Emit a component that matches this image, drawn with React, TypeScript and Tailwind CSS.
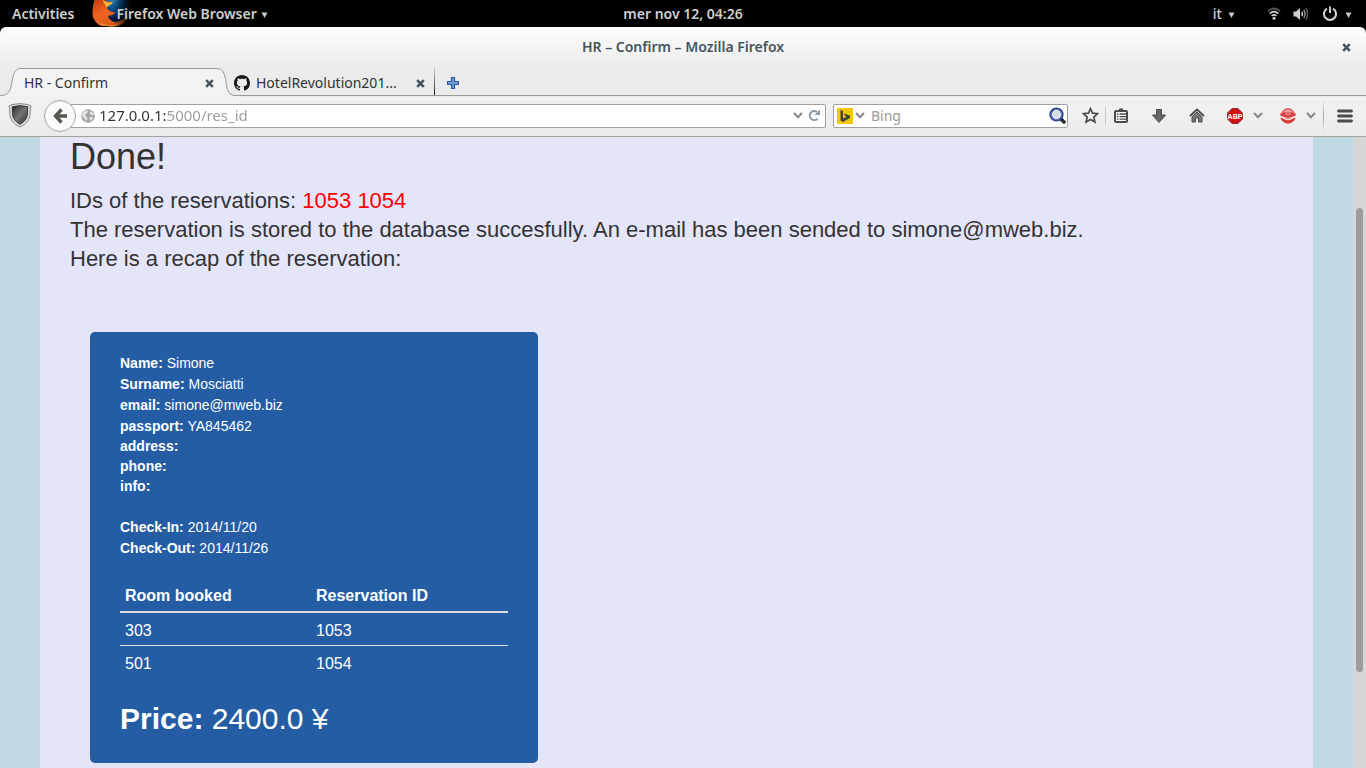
import type { ReactNode } from "react";

const ui = "font-['Noto_Sans','Open_Sans',sans-serif]";

function FirefoxLogo() {
  return (
    <svg width="40" height="27" viewBox="0 0 40 27" aria-hidden="true">
      <defs>
        <radialGradient id="globe" cx="0.5" cy="0.25" r="0.7">
          <stop offset="0" stopColor="#2c8cc4" />
          <stop offset="0.5" stopColor="#0d4f8f" />
          <stop offset="1" stopColor="#04183c" />
        </radialGradient>
        <linearGradient id="fox" x1="0" y1="0" x2="0.7" y2="1">
          <stop offset="0" stopColor="#c93a12" />
          <stop offset="0.45" stopColor="#ee6420" />
          <stop offset="1" stopColor="#d9591a" />
        </linearGradient>
        <linearGradient id="fade" x1="0" y1="0" x2="1" y2="0">
          <stop offset="0.5" stopColor="#000" stopOpacity="0" />
          <stop offset="1" stopColor="#000" stopOpacity="1" />
        </linearGradient>
      </defs>
      <circle cx="20" cy="8" r="19" fill="#a8641c" />
      <circle cx="22" cy="6" r="16" fill="url(#globe)" />
      <path
        d="M4 0 C0 7 -1 16 3 21 C5 24 8 26 11 26 L25 26 C30 24 34 21 36 17 C31 22 26 24 20 21 C17 19 15 17 17 15.500 C20 16 22 14 24 12 C20 13 15 10 15 7 C16 4 19 5 21 2 C18 2 14 1 12 0 Z"
        fill="url(#fox)"
      />
      <path d="M11 0 C13 2 17 3 21 2 C19 6 16 5 15 8 C14 5 11 3 11 0 Z" fill="#f6b53a" />
      <path d="M5 21 C12 26 22 27 30 21 C27 25 24 26 21 26 L12 26 C9 26 7 24 5 21 Z" fill="#f4a03a" opacity="0.6" />
      <rect width="40" height="27" fill="url(#fade)" />
    </svg>
  );
}

function Caret() {
  return (
    <svg width="7" height="8" viewBox="0 0 7 8" aria-hidden="true">
      <path d="M0.500 2.500H6.500L3.500 8Z" fill="#c9cac6" />
    </svg>
  );
}

function CloseMark() {
  return (
    <svg width="9" height="9" viewBox="0 0 9 9" aria-hidden="true">
      <path d="M1.2 1.2L7.8 7.8M7.8 1.2L1.2 7.8" stroke="#46555c" strokeWidth="2.6" />
    </svg>
  );
}

function Chevron() {
  return (
    <svg width="10" height="7" viewBox="0 0 10 7" aria-hidden="true">
      <path d="M1 1L5 5.3L9 1" fill="none" stroke="#888a85" strokeWidth="2" />
    </svg>
  );
}

function IconButton({ label, className, children }: { label: string; className?: string; children: ReactNode }) {
  return (
    <button aria-label={label} className={`flex shrink-0 items-center justify-center ${className ?? ""}`}>
      {children}
    </button>
  );
}

function TopBar() {
  return (
    <header className="grid h-[27px] shrink-0 grid-cols-[1fr_auto_1fr] items-center bg-black text-sm font-semibold text-[#d0d0cc]">
      <div className="flex h-[27px] items-center pl-3">
        <button>Activities</button>
        <button className="ml-[18px] flex h-full items-center">
          <FirefoxLogo />
          <span className="-ml-4 pr-1">Firefox Web Browser</span>
          <Caret />
        </button>
      </div>
      <time>mer nov 12, 04:26</time>
      <div className="flex items-center justify-end pr-[14px]">
        <button className="mr-8 flex items-center gap-1.5 font-medium">
          it <Caret />
        </button>
        <svg width="14" height="13" viewBox="0 0 14 13" fill="none" aria-label="Wireless" className="mr-3">
          <path d="M0.8 4.3Q7 -1.3 13.2 4.3" stroke="#555" strokeWidth="1.7" />
          <path d="M2.7 6.6Q7 2.8 11.3 6.6" stroke="#d0d0cc" strokeWidth="1.7" />
          <path d="M4.6 8.8Q7 6.8 9.4 8.8" stroke="#d0d0cc" strokeWidth="1.6" />
          <circle cx="7" cy="11.2" r="1.5" fill="#d0d0cc" />
        </svg>
        <svg width="16" height="14" viewBox="0 0 16 14" fill="none" aria-label="Volume" className="mr-3.5">
          <path d="M0.5 4.5H3L7 1V13L3 9.5H0.5Z" fill="#d0d0cc" />
          <path d="M8.8 4.8Q10.2 7 8.8 9.2" stroke="#d0d0cc" strokeWidth="1.5" />
          <path d="M10.8 3Q13.2 7 10.8 11" stroke="#8a8a88" strokeWidth="1.5" />
          <path d="M12.8 1.2Q16.4 7 12.8 12.8" stroke="#555" strokeWidth="1.5" />
        </svg>
        <button aria-label="Power" className="flex items-center gap-2">
          <svg width="14" height="15" viewBox="0 0 14 15" fill="none" aria-hidden="true">
            <path d="M4 2.7A6 6 0 1 0 10 2.7" stroke="#d0d0cc" strokeWidth="2" />
            <path d="M7 0.5V7" stroke="#d0d0cc" strokeWidth="2" />
          </svg>
          <Caret />
        </button>
      </div>
    </header>
  );
}

function TabStrip() {
  return (
    <div role="tablist" className="flex h-[30px] items-stretch text-sm text-[#2e3436]">
      <svg width="20" height="30" viewBox="0 0 20 30" aria-hidden="true" className="shrink-0">
        <path d="M0 28.5C16 28.5 11 12 15 5Q17 1.5 20 1.5V30H0Z" fill="#f3f3f3" />
        <path d="M0 28.5H2C14 28 10 12 15 4.5Q17 1.5 20 1.5" fill="none" stroke="#9a9a98" />
      </svg>
      <div className="mt-px flex w-[197px] items-center border-t border-[#9a9a98] bg-[#f3f3f3] pl-1">
        <button role="tab" aria-selected="true" className="grow text-left">
          HR - Confirm
        </button>
        <IconButton label="Close tab" className="size-4">
          <CloseMark />
        </IconButton>
      </div>
      <svg width="17" height="30" viewBox="0 0 17 30" aria-hidden="true" className="shrink-0">
        <path d="M0 1.5Q4 1.5 6 5C10 13 7 28.5 17 28.5V30H0Z" fill="#f3f3f3" />
        <path d="M0 1.5Q4 1.5 6 4.5C11 13 7 27 17 28.5" fill="none" stroke="#9a9a98" />
      </svg>
      <div className="mb-px flex grow items-stretch border-b border-[#9a9a98]">
        <button role="tab" aria-selected="false" className="flex w-[176px] items-center gap-1.5 pt-1">
          <svg width="16" height="16" viewBox="0 0 16 16" fill="#191717" aria-hidden="true" className="shrink-0">
            <path d="M8 0C3.58 0 0 3.58 0 8c0 3.54 2.29 6.53 5.47 7.59.4.07.55-.17.55-.38 0-.19-.01-.82-.01-1.49-2.01.37-2.53-.49-2.69-.94-.09-.23-.48-.94-.82-1.13-.28-.15-.68-.52-.01-.53.63-.01 1.08.58 1.23.82.72 1.21 1.87.87 2.33.66.07-.52.28-.87.51-1.07-1.78-.2-3.64-.89-3.64-3.95 0-.87.31-1.59.82-2.15-.08-.2-.36-1.02.08-2.12 0 0 .67-.21 2.2.82.64-.18 1.32-.27 2-.27s1.36.09 2 .27c1.53-1.04 2.2-.82 2.2-.82.44 1.1.16 1.92.08 2.12.51.56.82 1.27.82 2.15 0 3.07-1.87 3.75-3.65 3.95.29.25.54.73.54 1.48 0 1.07-.01 1.93-.01 2.2 0 .21.15.46.55.38A8.01 8.01 0 0 0 16 8c0-4.42-3.58-8-8-8z" />
          </svg>
          <span className="whitespace-nowrap">HotelRevolution201...</span>
        </button>
        <IconButton label="Close tab" className="w-5 pt-1">
          <CloseMark />
        </IconButton>
        <span className="ml-1 w-px bg-linear-to-b from-[#d8d8d8] to-[#222]" />
        <IconButton label="New tab" className="ml-2.5 w-4 pt-1">
          <svg width="12" height="12" viewBox="0 0 12 12" aria-hidden="true">
            <path d="M4.5 0.5H7.5V4.5H11.5V7.5H7.5V11.5H4.5V7.5H0.5V4.5H4.5Z" fill="#6f9fd6" stroke="#2a5b9e" strokeWidth="1.2" />
          </svg>
        </IconButton>
      </div>
    </div>
  );
}

function NavBar() {
  return (
    <div className="flex h-10 items-center border-b border-[#a2a29f] bg-linear-to-b from-[#f2f2f2] to-[#ebebeb] pb-0.5 pl-2">
      <IconButton label="Site protection" className="w-6">
        <svg width="24" height="25" viewBox="0 0 24 25" aria-hidden="true">
          <defs>
            <linearGradient id="shield" x1="0" y1="0" x2="1" y2="1">
              <stop offset="0" stopColor="#2b2b2b" />
              <stop offset="0.5" stopColor="#747474" />
              <stop offset="1" stopColor="#2b2b2b" />
            </linearGradient>
          </defs>
          <path d="M1 3L4 1.5Q12 -0.2 20 1.5L23 3Q21.8 5 22.3 9Q22.5 19.5 12 24Q1.500 19.5 1.700 9Q2.200 5 1 3Z" fill="#dedede" stroke="#858585" />
          <path d="M4.200 3.800Q12 1.500 19.800 3.800Q19.400 6 19.600 9.500Q19.400 17.500 12 21.300Q4.600 17.500 4.400 9.500Q4.600 6 4.200 3.800Z" fill="url(#shield)" stroke="#333" />
        </svg>
      </IconButton>
      <IconButton label="Back" className="relative ml-3 size-8 rounded-full border border-[#9aa5b0] bg-[#fafafa]">
        <svg width="15" height="16" viewBox="0 0 15 16" fill="none" aria-hidden="true">
          <path d="M8.500 1.500L2.500 8L8.500 14.500M2.500 8H14" stroke="#555753" strokeWidth="3.400" />
        </svg>
      </IconButton>
      <div className="-ml-4 flex h-6 grow items-center rounded-r-xs border border-[#a0a09e] bg-white pr-[3px] pl-5">
        <svg width="14" height="14" viewBox="0 0 14 14" aria-hidden="true" className="shrink-0">
          <circle cx="7" cy="7" r="6.800" fill="#a3a3a3" />
          <path d="M3 2L6 1.200L7 3L5 5L4 7L6 8L6.500 10L5 12.500L4 10L1.500 8L1 5ZM9 2L12 4L13 6L10.500 6L8.500 4.500ZM9 8L12 8L11 11L9 12L8.500 10Z" fill="#e4e4e4" />
        </svg>
        <input
          aria-label="Address"
          defaultValue="127.0.0.1:5000/res_id"
          className="ml-1 min-w-0 grow bg-linear-to-r from-[#2e3436] from-[67px] to-[#999b98] to-[67px] bg-clip-text text-[15px] text-transparent outline-none"
        />
        <IconButton label="History" className="w-4">
          <Chevron />
        </IconButton>
        <IconButton label="Reload" className="w-4">
          <svg width="13" height="13" viewBox="0 0 13 13" fill="none" aria-hidden="true">
            <path d="M9.500 9.700A4.500 4.500 0 1 1 9 3" stroke="#8d9aa8" strokeWidth="2" />
            <path d="M12 0.500V6H6.500Z" fill="#8d9aa8" />
          </svg>
        </IconButton>
      </div>
      <div className="ml-[7px] flex h-6 w-[235px] shrink-0 items-center rounded-xs border border-[#a0a09e] bg-white pr-px pl-[3px]">
        <button aria-label="Search engine" className="flex items-center gap-0.5">
          <svg width="16" height="16" viewBox="0 0 16 16" aria-hidden="true">
            <rect width="16" height="16" fill="#f5c70c" />
            <path d="M3.500 2L6 3V10.500L9.500 8.700L8 8L7 5.500L13 7.500V10L6 14L3.500 12.500Z" fill="#444" />
          </svg>
          <Chevron />
        </button>
        <input
          aria-label="Search"
          placeholder="Bing"
          className="ml-1.5 min-w-0 grow bg-transparent text-sm text-[#333] outline-none placeholder:text-[#999b98]"
        />
        <IconButton label="Search">
          <svg width="17" height="17" viewBox="0 0 17 17" fill="none" aria-hidden="true">
            <path d="M11 11L15 15" stroke="#2b2b2b" strokeWidth="3.600" strokeLinecap="round" />
            <circle cx="7.500" cy="7.500" r="5.800" fill="#fff" stroke="#1f3477" strokeWidth="2.600" />
            <circle cx="7.500" cy="7.500" r="5.400" stroke="#7895df" strokeWidth="1" />
            <circle cx="7.500" cy="7.500" r="3.400" fill="#d6d9e6" />
          </svg>
        </IconButton>
      </div>
      <IconButton label="Bookmark" className="ml-3 w-5">
        <svg width="17" height="17" viewBox="0 0 17 17" aria-hidden="true">
          <path d="M8.500 1.700L10.500 6.200L15.500 6.700L11.800 10L12.900 15L8.500 12.400L4.100 15L5.200 10L1.500 6.700L6.500 6.200Z" fill="#f4f4f4" stroke="#4b4b4b" strokeWidth="1.700" />
        </svg>
      </IconButton>
      <span className="mx-[5px] h-[18px] w-px shrink-0 bg-[#c8c8c8]" />
      <IconButton label="Bookmarks list" className="w-5">
        <svg width="14" height="15" viewBox="0 0 14 15" fill="none" aria-hidden="true">
          <path d="M5 0.500H9V3H5Z" fill="#4b4b4b" />
          <rect x="1" y="3" width="12" height="11" rx="1" fill="#fff" stroke="#4b4b4b" strokeWidth="2" />
          <path d="M3 6H4.500M3 8.600H4.500M3 11.200H4.500M5.500 6H12M5.500 8.600H12M5.500 11.200H12" stroke="#4b4b4b" strokeWidth="1.300" />
        </svg>
      </IconButton>
      <IconButton label="Downloads" className="ml-[18px] w-5">
        <svg width="14" height="14" viewBox="0 0 14 14" aria-hidden="true">
          <path d="M4.500 0.500H9.500V6H13.500L7 13.500L0.500 6H4.500Z" fill="#666" stroke="#4b4b4b" />
        </svg>
      </IconButton>
      <IconButton label="Home" className="ml-[18px] w-5">
        <svg width="16" height="15" viewBox="0 0 16 15" aria-hidden="true">
          <path d="M8 4L13 8.800V14H9.500V10H6.500V14H3V8.800Z" fill="#777" stroke="#4b4b4b" />
          <path d="M1 8L8 1.500L15 8" fill="none" stroke="#4b4b4b" strokeWidth="1.900" />
        </svg>
      </IconButton>
      <IconButton label="Adblock Plus" className="ml-[18px] w-5">
        <svg width="16" height="16" viewBox="0 0 16 16" aria-hidden="true">
          <path d="M5 0.500H11L15.500 5V11L11 15.500H5L0.500 11V5Z" fill="#cc1410" stroke="#8d3230" />
          <text x="8" y="11" textAnchor="middle" fontSize="7" fontWeight="700" fill="#fff" fontFamily="Liberation Sans Narrow, Liberation Sans, sans-serif">
            ABP
          </text>
        </svg>
      </IconButton>
      <IconButton label="Adblock Plus menu" className="ml-[3px] w-5">
        <Chevron />
      </IconButton>
      <IconButton label="Add-on" className="ml-2.5 w-5">
        <svg width="16" height="16" viewBox="0 0 16 16" aria-hidden="true">
          <path d="M1.500 5Q3 0.300 8 0.300Q13 0.300 14.500 5Q8 8 1.500 5Z" fill="#dd5250" />
          <path d="M3.500 3.200Q8 0.500 12.500 3.200L11 4.500H5Z" fill="#f0a3a1" />
          <path d="M0.300 5.200H4L6 7H10L12 5.200H15.700V7.500L13 8.500Q8 11 3 8.500L0.300 7.500Z" fill="#d93a3a" />
          <path d="M0.300 9.500Q3 10 4 11Q8 13.500 12 11Q13 10 15.700 9.500Q15 12 13.500 13.300Q11 15.700 8 15.700Q5 15.700 2.500 13.300Q1 12 0.300 9.500Z" fill="#d93a3a" />
          <path d="M4.500 9.300Q8 11.200 11.500 9.300L10.500 10.800Q8 11.800 5.500 10.800Z" fill="#e88583" />
        </svg>
      </IconButton>
      <IconButton label="Add-on menu" className="ml-[3px] w-5">
        <Chevron />
      </IconButton>
      <span className="ml-0.5 h-8 w-px shrink-0 bg-linear-to-b from-[#ececec] via-[#9aa5b0] to-[#ececec]" />
      <IconButton label="Open menu" className="mx-3 w-[18px]">
        <svg width="16" height="14" viewBox="0 0 16 14" aria-hidden="true">
          <path d="M1.500 2H14.500M1.500 7H14.500M1.500 12H14.500" stroke="#4b4b4b" strokeWidth="2.800" strokeLinecap="round" />
        </svg>
      </IconButton>
    </div>
  );
}

const guest = [
  ["Name:", "Simone"],
  ["Surname:", "Mosciatti"],
  ["email:", "simone@mweb.biz"],
  ["passport:", "YA845462"],
];
const emptyFields = ["address:", "phone:", "info:"];
const stay = [
  ["Check-In:", "2014/11/20"],
  ["Check-Out:", "2014/11/26"],
];
const rooms = [
  ["303", "1053"],
  ["501", "1054"],
];

function Recap() {
  return (
    <section className="ml-5 w-[448px] rounded-[5px] bg-[#245da4] px-[30px] pt-5 pb-6 text-white">
      <div className="text-sm leading-5">
        {guest.map(([k, v]) => (
          <p key={k} className="pt-px">
            <b>{k}</b> {v}
          </p>
        ))}
        {emptyFields.map((k) => (
          <p key={k}>
            <b>{k}</b>
          </p>
        ))}
        <div className="mt-5">
          {stay.map(([k, v]) => (
            <p key={k} className="pt-px">
              <b>{k}</b> {v}
            </p>
          ))}
        </div>
      </div>
      <table className="mt-5 w-full table-fixed border-separate border-spacing-0 text-left text-base leading-6">
        <thead>
          <tr>
            <th className="w-[191px] border-b-2 border-[#dddddd] px-[5px] pt-1.5 pb-[3px] font-bold">Room booked</th>
            <th className="border-b-2 border-[#dddddd] px-[5px] pt-1.5 pb-[3px] font-bold">Reservation ID</th>
          </tr>
        </thead>
        <tbody>
          {rooms.map(([room, id], i) => (
            <tr key={id}>
              {[room, id].map((c) => (
                <td key={c} className={i === 0 ? "border-b border-[#dddddd] px-[5px] pt-1.5 pb-0.5" : "px-[5px] pt-1.5 pb-[3px]"}>
                  {c}
                </td>
              ))}
            </tr>
          ))}
        </tbody>
      </table>
      <p className="mt-5 text-3xl leading-10">
        <b>Price:</b> 2400.0 ¥
      </p>
    </section>
  );
}

export default function App() {
  return (
    <div className="flex h-screen flex-col overflow-hidden bg-black">
      <div className={`shrink-0 ${ui}`}>
        <TopBar />
        <div className="rounded-t-md bg-linear-to-b from-[#fefefe] to-[#ebebeb] to-[42px]">
          <div className="grid h-10 grid-cols-[1fr_auto_1fr] items-center text-sm font-semibold text-[#46555c]">
            <h1 className="col-start-2">HR – Confirm – Mozilla Firefox</h1>
            <IconButton label="Close window" className="mr-3 size-4 justify-self-end">
              <CloseMark />
            </IconButton>
          </div>
          <TabStrip />
          <NavBar />
        </div>
      </div>
      <div className="flex min-h-0 grow bg-[#c0d8e4] font-['Liberation_Sans',Arial,sans-serif] text-[#333333]">
        <main className="mx-10 min-w-0 grow overflow-hidden bg-[#e5e5fa] px-[30px]">
          <h2 className="text-4xl leading-10">Done!</h2>
          <div className="mt-[9px] text-[22px] leading-[29px]">
            <p>
              IDs of the reservations: <span className="text-[#ff0000]">1053 1054</span>
            </p>
            <p>The reservation is stored to the database succesfully. An e-mail has been sended to simone@mweb.biz.</p>
            <p>Here is a recap of the reservation:</p>
          </div>
          <div className="mt-[59px]">
            <Recap />
          </div>
        </main>
        <div className="flex w-[13px] shrink-0 flex-col items-center bg-[#d6d6d6] pt-[71px]">
          <div className="h-[464px] w-[7px] rounded-full bg-[#9b9c9c]" />
        </div>
      </div>
    </div>
  );
}
